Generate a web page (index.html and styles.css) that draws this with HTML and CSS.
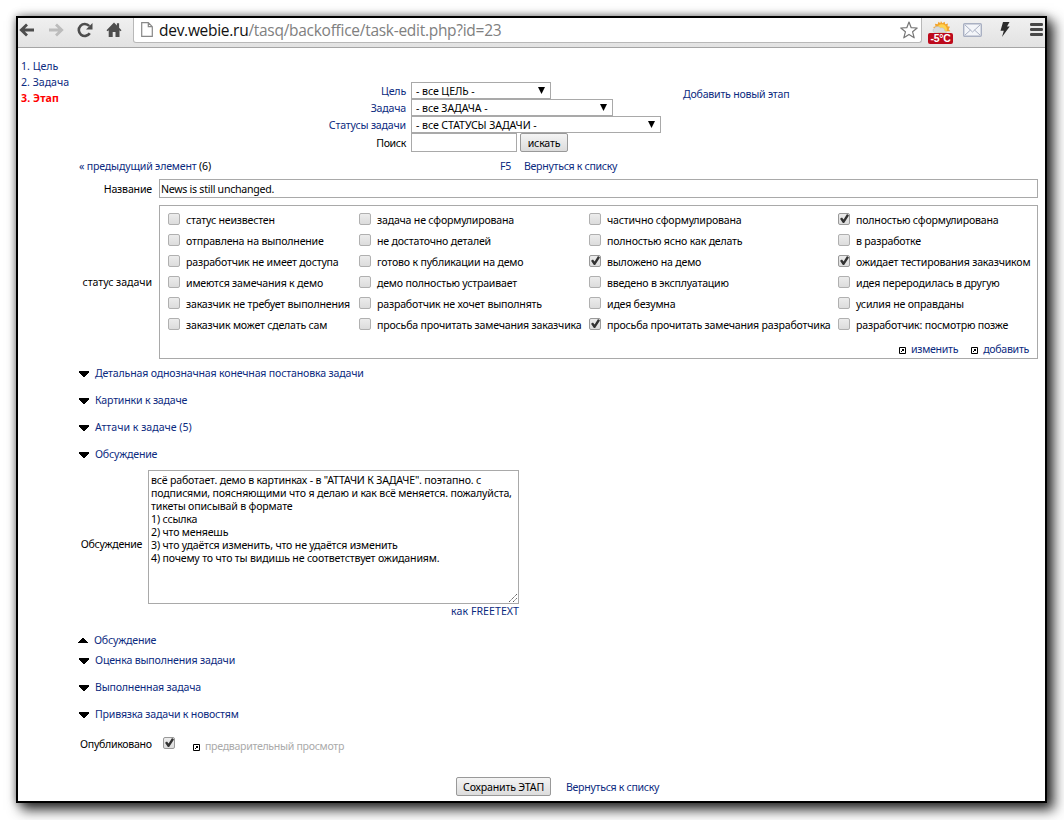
FILE: index.html
```
<!DOCTYPE html>
<html lang="ru">
<head>
<meta charset="utf-8">
<title>Этап</title>
<link rel="stylesheet" href="styles.css">
</head>
<body>
<svg class="defs" width="0" height="0">
  <symbol id="ext" viewBox="0 0 7 7"><path d="M.5.5h6v6h-6z" fill="#fff" stroke="#000"/><path d="M2 4h1v1H2zM3 3h1v1H3zM3 2h2v2H4V3H3z" fill="#000"/></symbol>
  <symbol id="down" viewBox="0 0 10 6"><path d="M0 0h10v2H9v1H8v1H7v1H6v1H4V5H3V4H2V3H1V2H0z"/></symbol>
  <symbol id="up" viewBox="0 0 10 6"><path d="M0 6h10V5H9V4H8V3H7V2H6V1H4v1H3v1H2v1H1v1H0z"/></symbol>
  <symbol id="arrow" viewBox="0 0 16 14"><path d="M15 7H3M8 1.5L2.3 7 8 12.500" fill="none" stroke="currentColor" stroke-width="2.8"/></symbol>
</svg>
<div class="window">
  <header class="toolbar">
    <svg class="ico back" viewBox="0 0 16 14"><use href="#arrow"/></svg>
    <svg class="ico fwd" viewBox="0 0 16 14"><use href="#arrow"/></svg>
    <svg class="ico reload" viewBox="0 0 16 16"><path d="M12.800 11.300A6 6 0 1 1 12.300 4" fill="none" stroke="currentColor" stroke-width="2.600"/><path d="M15.500 1v6.500H9z" fill="currentColor"/></svg>
    <svg class="ico home" viewBox="0 0 16 16"><path d="M8 .6L.5 8.300l1 1L2.700 8.200V15h4v-5h2.800v5h4V8.200l1 1.100 1-1-2.400-2.500V1.200h-2.200v2.200z" fill="currentColor"/></svg>
    <div class="address">
      <svg class="page" viewBox="0 0 12 15"><path d="M.7.7h6.600l4 4v9.600H.7z M7.300.7v4h4" fill="#fff" stroke="#888" stroke-width="1.200"/></svg>
      <span class="url"><b>dev.webie.ru</b>/tasq/backoffice/task-edit.php?id=23</span>
      <svg class="star" viewBox="0 0 18 18"><path d="M9 1l2.200 5.700 6 .3-4.600 3.800 1.600 6L9 13.400l-5.200 3.400 1.600-6L.8 7l6-.3z" fill="#fff" stroke="#777" stroke-width="1.200" stroke-linejoin="round"/></svg>
    </div>
    <div class="weather">
      <svg viewBox="0 0 25 13"><path d="M13 0l1.500 2.500L17 .7l.6 2.800 3-.7-.6 3 2.800.5-1.500 2.600 2 2.100H6l.5-2L4.500 6.500l2.600-.6-.6-3 2.900.5L10.300.7l2 1.700z" fill="#f3a42c"/><circle cx="14" cy="9" r="5.500" fill="#ffd34d"/><path d="M6 12.800a3 3 0 0 1 0-5.300 4 4 0 0 1 6.500.2 3 3 0 0 1 4.500 2.800 2.500 2.500 0 0 1 2 2.300z" fill="#d7dade" stroke="#b4b9bf" stroke-width=".5"/></svg>
      <span class="temp">-5°C</span>
    </div>
    <svg class="mail" viewBox="0 0 19 14"><rect x=".7" y=".7" width="17.600" height="12.600" rx="1" fill="#f3f5f9" stroke="#a9b0c2" stroke-width="1.400"/><path d="M2 2l7.500 7L17 2M2 12l5.500-5M17 12l-5.500-5" fill="none" stroke="#a9b0c2" stroke-width="1"/></svg>
    <svg class="bolt" viewBox="0 0 10 15"><path d="M3 0h6.500L7 4.500h2.700L2 15l1.800-6.300H.5z" fill="#2c2c2c"/></svg>
    <svg class="menu" viewBox="0 0 13 13"><path d="M1.200 1.500h10.600M1.200 6.500h10.600M1.200 11.500h10.600" stroke="#484848" stroke-width="2.800" stroke-linecap="round"/></svg>
  </header>
  <div class="content">
    <nav class="steps"><a>1. Цель</a><a>2. Задача</a><a class="current">3. Этап</a></nav>
    <main class="main">
      <section class="filter">
        <div class="filter-form">
          <div class="frow"><a class="flabel">Цель</a><div class="select s1"><span>- все ЦЕЛЬ -</span><i></i></div></div>
          <div class="frow"><a class="flabel">Задача</a><div class="select s2"><span>- все ЗАДАЧА -</span><i></i></div></div>
          <div class="frow"><a class="flabel">Статусы задачи</a><div class="select s3"><span>- все СТАТУСЫ ЗАДАЧИ -</span><i></i></div></div>
          <div class="frow search"><span class="flabel">Поиск</span><div class="query"></div><div class="button find">искать</div></div>
        </div>
        <a class="add">Добавить новый этап</a>
      </section>
      <div class="pager"><span class="prev"><a>« предыдущий элемент</a> (6)</span><a class="refresh">F5</a><a class="tolist">Вернуться к списку</a></div>
      <div class="field name"><span class="label">Название</span><div class="text-input">News is still unchanged.</div></div>
      <div class="field status"><span class="label">статус задачи</span>
        <div class="box">
          <div class="checks">
            <label><i class="cb"></i>статус неизвестен</label><label><i class="cb"></i>задача не сформулирована</label><label><i class="cb"></i>частично сформулирована</label><label><i class="cb on"></i>полностью сформулирована</label>
            <label><i class="cb"></i>отправлена на выполнение</label><label><i class="cb"></i>не достаточно деталей</label><label><i class="cb"></i>полностью ясно как делать</label><label><i class="cb"></i>в разработке</label>
            <label><i class="cb"></i>разработчик не имеет доступа</label><label><i class="cb"></i>готово к публикации на демо</label><label><i class="cb on"></i>выложено на демо</label><label><i class="cb on"></i>ожидает тестирования заказчиком</label>
            <label><i class="cb"></i>имеются замечания к демо</label><label><i class="cb"></i>демо полностью устраивает</label><label><i class="cb"></i>введено в эксплуатацию</label><label><i class="cb"></i>идея переродилась в другую</label>
            <label><i class="cb"></i>заказчик не требует выполнения</label><label><i class="cb"></i>разработчик не хочет выполнять</label><label><i class="cb"></i>идея безумна</label><label><i class="cb"></i>усилия не оправданы</label>
            <label><i class="cb"></i>заказчик может сделать сам</label><label><i class="cb"></i>просьба прочитать замечания заказчика</label><label><i class="cb on"></i>просьба прочитать замечания разработчика</label><label><i class="cb"></i>разработчик: посмотрю позже</label>
          </div>
          <div class="box-links"><a class="edit"><svg class="ext"><use href="#ext"/></svg>изменить</a><a><svg class="ext"><use href="#ext"/></svg>добавить</a></div>
        </div>
      </div>
      <div class="toggles">
        <a class="toggle"><svg><use href="#down"/></svg>Детальная однозначная конечная постановка задачи</a>
        <a class="toggle"><svg><use href="#down"/></svg>Картинки к задаче</a>
        <a class="toggle count"><svg><use href="#down"/></svg>Аттачи к задаче (5)</a>
        <a class="toggle"><svg><use href="#down"/></svg>Обсуждение</a>
      </div>
      <div class="discussion"><span class="label">Обсуждение</span>
        <div class="textarea">всё работает. демо в картинках - в "АТТАЧИ К ЗАДАЧЕ". поэтапно. с<br>подписями, поясняющими что я делаю и как всё меняется. пожалуйста,<br>тикеты описывай в формате<br>1) ссылка<br>2) что меняешь<br>3) что удаётся изменить, что не удаётся изменить<br>4) почему то что ты видишь не соответствует ожиданиям.
          <svg class="grip" viewBox="0 0 8 8"><path d="M0 8L8 0M4 8L8 4" stroke="#555" stroke-dasharray="1.400 .6" fill="none"/></svg>
        </div>
      </div>
      <a class="freetext">как FREETEXT</a>
      <a class="toggle collapse"><svg><use href="#up"/></svg>Обсуждение</a>
      <div class="toggles">
        <a class="toggle"><svg><use href="#down"/></svg>Оценка выполнения задачи</a>
        <a class="toggle"><svg><use href="#down"/></svg>Выполненная задача</a>
        <a class="toggle"><svg><use href="#down"/></svg>Привязка задачи к новостям</a>
      </div>
      <div class="publish"><span class="pub-label">Опубликовано</span><i class="cb on"></i><span class="preview"><svg class="ext"><use href="#ext"/></svg>предварительный просмотр</span></div>
      <div class="actions"><div class="button save">Сохранить ЭТАП</div><a class="tolist">Вернуться к списку</a></div>
    </main>
  </div>
</div>
</body>
</html>
```
FILE: styles.css
```
* { box-sizing: border-box; }
body { margin: 0; height: 820px; overflow: hidden; background: #fff; font: 10.6px/16px "Noto Sans", sans-serif; letter-spacing: -0.18px; color: #000; white-space: nowrap; }
a { color: #0b2a80; }
.defs { position: absolute; }
.window { margin: 16px; width: 1031px; height: 787px; border: 2px solid #000; background: #fff; box-shadow: 6px 6px 12px 1px rgba(0,0,0,.8), 0 0 8px rgba(0,0,0,.4); }

.toolbar { display: flex; height: 30px; padding-left: 1px; background: linear-gradient(#f0f0f0, #e2e2e2); border-bottom: 1px solid #a5a5a5; color: #4d4d4d; }
.ico { flex: none; }
.back, .fwd { width: 16px; height: 14px; margin-top: 5px; }
.fwd { margin-left: 13px; color: #bcbcbc; }
.fwd use { transform: scaleX(-1); transform-origin: 8px 7px; }
.reload { width: 16px; height: 16px; margin: 4px 0 0 13px; }
.home { width: 16px; height: 16px; margin: 4px 0 0 13px; }
.address { display: flex; margin-left: 11px; width: 789px; height: 25px; background: #fff; border: 1px solid #b8b8b8; border-top: 0; border-radius: 0 0 3px 3px; }
.page { width: 12px; height: 15px; margin: 4px 0 0 7px; }
.url { margin-left: 6px; font: 15.5px/24px "Open Sans", sans-serif; letter-spacing: -0.28px; color: #808080; }
.url b { font-weight: 400; color: #111; }
.star { width: 18px; height: 18px; margin: 3px 3px 0 auto; }
.weather { width: 25px; margin: 3px 0 0 6px; }
.weather svg { display: block; width: 25px; height: 12px; }
.temp { display: block; height: 11px; border-radius: 2px; background: #bd0a1c; color: #fff; font: bold 10.5px/11px "Liberation Sans", sans-serif; text-align: center; letter-spacing: -.3px; }
.mail { width: 19px; height: 14px; margin: 5px 0 0 10px; }
.bolt { width: 10px; height: 15px; margin: 4px 0 0 18px; }
.menu { width: 13px; height: 13px; margin: 5px 0 0 20px; }

.content { display: flex; height: 753px; }
.steps { display: flex; flex-direction: column; width: 60px; padding: 10px 0 0 3px; letter-spacing: 0; }
.steps .current { color: #f00; font-weight: 700; letter-spacing: .1px; }
.main { width: 967px; }

.filter { display: flex; padding-top: 34px; height: 105px; }
.filter-form { width: 605px; }
.frow { display: flex; height: 17px; }
.search { height: 19px; }
.flabel { width: 328px; margin-right: 5px; text-align: right; line-height: 18px; }
.search .flabel { line-height: 20px; letter-spacing: -.35px; }
.select { display: flex; justify-content: space-between; height: 17px; border: 1px solid #a9a9a9; padding: 0 5px 0 4px; line-height: 16px; letter-spacing: -.08px; }
.select i { width: 7px; height: 7px; margin-top: 4px; background: #000; clip-path: polygon(0 0, 100% 0, 50% 100%); }
.s1 { width: 140px; }
.s2 { width: 202px; }
.s3 { width: 250px; }
.query { width: 106px; border: 1px solid #a9a9a9; }
.button { height: 19px; border: 1px solid #999; border-radius: 2px; background: linear-gradient(#f4f4f4, #dcdcdc); text-align: center; line-height: 18px; }
.find { width: 48px; margin-left: 3px; }
.add { margin-top: 4px; letter-spacing: -.23px; }

.pager { display: flex; height: 26px; padding: 5px 0 0 1px; }
.prev { width: 421px; }
.refresh { width: 24px; }
.tolist { letter-spacing: -.3px; }
.field { display: flex; align-items: center; }
.field .label { width: 74px; margin-right: 7px; text-align: right; }
.status .label { letter-spacing: -.05px; }
.text-input { width: 879px; height: 19px; border: 1px solid #a9a9a9; padding-left: 1px; line-height: 18px; letter-spacing: -.27px; }
.status { margin-top: 7px; }
.box { width: 879px; height: 154px; border: 1px solid #a9a9a9; padding: 4px 0 0 8px; }
.checks { display: grid; grid-template-columns: 191px 230px 249px 190px; grid-auto-rows: 21px; letter-spacing: -.2px; }
.checks label { display: flex; line-height: 20px; }
.cb { display: block; flex: none; position: relative; width: 12px; height: 12px; margin: 3px 6px 0 0; border: 1px solid #b0b0b0; border-radius: 2px; background: linear-gradient(#ececec, #dcdcdc); }
.cb.on { border-color: #999; }
.cb.on::after { content: ""; position: absolute; left: 1px; top: 0; width: 9px; height: 9px; background: #333; clip-path: polygon(0 52%, 22% 38%, 40% 60%, 78% 0, 100% 16%, 46% 100%, 32% 100%); }
.box-links { display: flex; justify-content: flex-end; padding: 5px 8px 0 0; letter-spacing: -.3px; }
.edit { margin-right: 13px; }
.ext { width: 7px; height: 7px; margin-right: 5px; vertical-align: -1px; }

.toggles { display: flex; flex-direction: column; gap: 11px; padding: 6px 0 0 1px; }
.toggle { display: flex; height: 16px; letter-spacing: -.2px; }
.toggle:first-child { letter-spacing: -.18px; }
.toggle.count { letter-spacing: 0; }
.toggle svg { width: 10px; height: 6px; margin: 6px 6px 0 0; fill: #000; }
.discussion { display: flex; align-items: center; margin-top: 8px; }
.discussion .label { width: 64px; margin-right: 6px; text-align: right; padding-top: 14px; letter-spacing: -.3px; }
.textarea { position: relative; width: 371px; height: 134px; border: 1px solid #a9a9a9; padding: 3px 2px; line-height: 13px; }
.grip { position: absolute; right: 1px; bottom: 1px; width: 8px; height: 8px; }
.freetext { display: block; width: 441px; height: 15px; text-align: right; line-height: 14px; letter-spacing: .04px; }
.collapse { margin-top: 13px; }
.toggle.collapse svg { margin-top: 5px; }
.collapse + .toggles { padding-top: 4px; }
.publish { display: flex; height: 28px; padding: 14px 0 0 2px; }
.pub-label { width: 83px; letter-spacing: -.3px; }
.publish .cb { margin-top: 1px; margin-right: 18px; }
.preview { color: #aaa; padding-top: 2px; letter-spacing: -.31px; }
.actions { display: flex; margin-top: 27px; padding-left: 378px; line-height: 20px; }
.save { width: 95px; margin-right: 15px; }
```
